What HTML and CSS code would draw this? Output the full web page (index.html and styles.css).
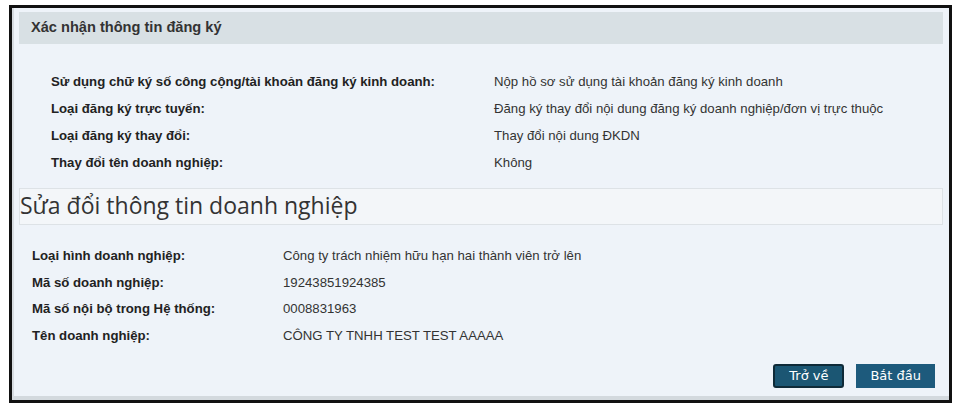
FILE: index.html
```html
<!DOCTYPE html>
<html lang="vi">
<head>
    <meta charset="UTF-8">
    <title>Xác nhận thông tin đăng ký</title>
    <link rel="stylesheet" href="styles.css">
</head>
<body>

<div class="frame">
    <div class="panel">
        <div class="panel-header">Xác nhận thông tin đăng ký</div>

        <table class="info info-reg">
            <tr>
                <td class="label">Sử dụng chữ ký số công cộng/tài khoản đăng ký kinh doanh:</td>
                <td class="value">Nộp hồ sơ sử dụng tài khoản đăng ký kinh doanh</td>
            </tr>
            <tr>
                <td class="label">Loại đăng ký trực tuyến:</td>
                <td class="value">Đăng ký thay đổi nội dung đăng ký doanh nghiệp/đơn vị trực thuộc</td>
            </tr>
            <tr>
                <td class="label">Loại đăng ký thay đổi:</td>
                <td class="value">Thay đổi nội dung ĐKDN</td>
            </tr>
            <tr>
                <td class="label">Thay đổi tên doanh nghiệp:</td>
                <td class="value">Không</td>
            </tr>
        </table>

        <h2 class="section-title">Sửa đổi thông tin doanh nghiệp</h2>

        <table class="info info-company">
            <tr>
                <td class="label">Loại hình doanh nghiệp:</td>
                <td class="value">Công ty trách nhiệm hữu hạn hai thành viên trở lên</td>
            </tr>
            <tr>
                <td class="label">Mã số doanh nghiệp:</td>
                <td class="value">19243851924385</td>
            </tr>
            <tr>
                <td class="label">Mã số nội bộ trong Hệ thống:</td>
                <td class="value">0008831963</td>
            </tr>
            <tr>
                <td class="label">Tên doanh nghiệp:</td>
                <td class="value">CÔNG TY TNHH TEST TEST AAAAA</td>
            </tr>
        </table>

        <div class="actions">
            <button type="button" class="btn btn-back">Trở về</button>
            <button type="button" class="btn">Bắt đầu</button>
        </div>
    </div>
</div>

</body>
</html>
```

FILE: styles.css
```css
body {
    margin: 0;
    padding: 0;
    background-color: #fff;
    font-family: "Liberation Sans", Arial, sans-serif;
    color: #222;
}
.frame {
    margin: 5px 0 0 9px;
    width: 937px;
    border: 3px solid #111;
}
.panel {
    background-color: #eef3f9;
    border-left: 2px solid #d6dbe0;
    border-bottom: 4px solid #d3d9de;
    padding: 4px 6px 8px 5px;
}
.panel-header {
    background-color: #d8e0e4;
    height: 32px;
    line-height: 31px;
    padding-left: 12px;
    font-size: 14.6px;
    font-weight: bold;
    color: #333;
}
.info {
    border-collapse: collapse;
    font-size: 13.2px;
}
.info td {
    padding: 0;
    height: 27px;
}
.info .label {
    font-weight: bold;
    color: #222;
}
.info .value {
    color: #333;
}
.info-reg {
    margin: 24px 0 0 32px;
}
.info-reg .label {
    width: 443px;
}
.info-company {
    margin: 17px 0 0 13px;
}
.info-company td {
    height: 26.7px;
}
.info-company .label {
    width: 251px;
}
.section-title {
    margin: 12px 0 0 0;
    height: 35px;
    line-height: 33px;
    padding-left: 0;
    background-color: #f3f6f9;
    border: 1px solid #dde2e6;
    font-family: "Open Sans", sans-serif;
    font-size: 23px;
    font-weight: normal;
    color: #333;
}
.actions {
    display: flex;
    justify-content: flex-end;
    gap: 12px;
    margin-top: 15px;
    padding-right: 8px;
}
.btn {
    height: 24px;
    padding: 0 14px;
    background-color: #1d5a7c;
    color: #fff;
    border: none;
    font-family: "DejaVu Sans", Verdana, sans-serif;
    font-size: 13px;
    cursor: pointer;
}
.btn-back {
    border: 2px solid #0e2a38;
    border-radius: 3px;
    padding: 0 14px;
    background-color: #1b5673;
}
```
